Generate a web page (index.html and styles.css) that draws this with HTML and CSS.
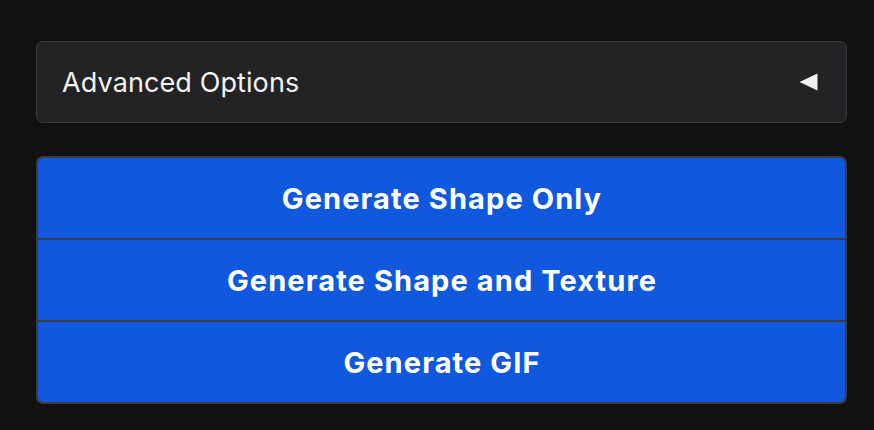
FILE: index.html
```html
<!DOCTYPE html>
<html lang="en">
<head>
<meta charset="utf-8">
<link rel="stylesheet" href="styles.css">
</head>
<body>
<div class="page">
  <div class="accordion">
    <span class="acc-label">Advanced Options</span>
    <svg class="acc-icon" width="19" height="18" viewBox="0 0 19 18"><path d="M0.5 9 L18.5 0.5 L18.5 17.5 Z" fill="#f2f2f2"/></svg>
  </div>
  <div class="btn-group">
    <button class="btn">Generate Shape Only</button>
    <button class="btn">Generate Shape and Texture</button>
    <button class="btn">Generate GIF</button>
  </div>
</div>
</body>
</html>
```
FILE: styles.css
```css
html, body {
  margin: 0;
  padding: 0;
  background: #111111;
}
.page {
  padding: 41px 27px 0 36px;
  display: flex;
  flex-direction: column;
  gap: 33px;
  font-family: Inter, "Noto Sans", sans-serif;
}
.accordion {
  height: 82px;
  box-sizing: border-box;
  border: 1.5px solid #3b3b3f;
  border-radius: 7px;
  background: #232325;
  display: flex;
  align-items: center;
  justify-content: space-between;
  padding: 0 28px 0 25px;
}
.acc-label {
  color: #f2f2f2;
  font-size: 27px;
  font-weight: 400;
  letter-spacing: 0.1px;
}
.acc-icon {
  display: block;
}
.btn-group {
  display: flex;
  flex-direction: column;
  border: 2px solid #3b3b3f;
  border-radius: 7px;
  overflow: hidden;
  background: #3b3b3f;
  gap: 2px;
}
.btn {
  height: 80px;
  border: none;
  margin: 0;
  background: #1059de;
  color: #ffffff;
  font-family: Inter, "Noto Sans", sans-serif;
  font-size: 29px;
  font-weight: 700;
  letter-spacing: 1.1px;
  padding: 0 0 0 1px;
  cursor: pointer;
}
```
